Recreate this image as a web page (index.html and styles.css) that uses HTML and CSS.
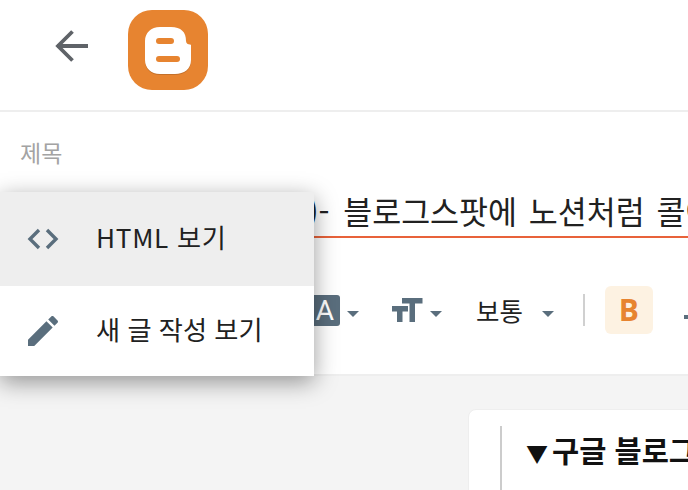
FILE: index.html
```html
<!DOCTYPE html>
<html lang="ko">
<head>
    <meta charset="UTF-8">
    <meta name="viewport" content="width=device-width, initial-scale=1.0">
    <title>새 글 작성</title>
    <link rel="stylesheet" href="styles.css">
</head>
<body>
    <header class="topbar">
        <svg class="back-icon" width="36" height="36" viewBox="0 0 36 36">
            <path d="M4 18H35M19.500 3.500L5 18L19.500 32.500" fill="none" stroke="#5f6368" stroke-width="3.800"/>
        </svg>
        <svg class="logo" width="80" height="80" viewBox="0 0 80 80">
            <rect width="80" height="80" rx="24" fill="#e78430"/>
            <path d="M32 18H43C53 18 58 23 58 32C58 34.500 60 35.500 62 35.500C63.500 35.500 63 37 63 39V51C63 60 56 65 47 65H32C23 65 17 59 17 51V32C17 24 23 18 32 18Z" fill="#c4702a"/>
            <path d="M32 17H43C53 17 58 22 58 31C58 33.500 60 34.500 62 34.500C63.500 34.500 63 36 63 38V50C63 59 56 64 47 64H32C23 64 17 58 17 50V31C17 23 23 17 32 17Z" fill="#fff"/>
            <rect x="28" y="28" width="18" height="6" rx="3" fill="#e78430"/>
            <rect x="28" y="46" width="24" height="6" rx="3" fill="#e78430"/>
        </svg>
    </header>

    <section class="title-area">
        <div class="title-label">제목</div>
        <div class="title-input"><span class="title-prefix">구글 블로그 꾸미기 (10)-</span>  <span class="title-main">블로그스팟에 노션처럼 콜아웃 넣기</span></div>
    </section>

    <div class="toolbar">
        <span class="tool-a">A</span>
        <span class="caret caret-a"></span>
        <svg class="tool-size" width="31" height="24" viewBox="0 0 31 24">
            <path d="M0 8H16V13.500H10.500V24H5V13.500H0ZM10 0H30.500V5.500H23V24H17.500V5.500H10Z" fill="#5a6e7d"/>
        </svg>
        <span class="caret caret-size"></span>
        <span class="tool-format">보통</span>
        <span class="caret caret-format"></span>
        <span class="tool-sep"></span>
        <span class="tool-bold">B</span>
        <span class="tool-next"></span>
    </div>

    <main class="editor">
        <div class="post-card">
            <div class="post-quote"><span class="quote-mark">▼</span>구글 블로그 꾸미기</div>
        </div>
    </main>

    <div class="mode-menu">
        <div class="mode-item mode-item-active">
            <svg class="mode-icon" width="40" height="40" viewBox="0 0 40 40">
                <path d="M16 11L7 20L16 29M24 11L33 20L24 29" fill="none" stroke="#5a6e7d" stroke-width="3.400"/>
            </svg>
            <span class="mode-text mode-text-html">HTML 보기</span>
        </div>
        <div class="mode-item">
            <svg class="mode-icon" width="40" height="40" viewBox="0 0 24 24">
                <path d="M3 17.250V21h3.750L17.810 9.940l-3.750-3.750L3 17.250zM20.710 7.040c.39-.39.39-1.020 0-1.410l-2.340-2.340c-.39-.39-1.020-.39-1.410 0l-1.830 1.830 3.750 3.750 1.830-1.830z" fill="#5a6e7d"/>
            </svg>
            <span class="mode-text">새 글 작성 보기</span>
        </div>
    </div>
</body>
</html>
```

FILE: styles.css
```css
html, body {
    margin: 0;
    height: 490px;
    overflow: hidden;
}
body {
    position: relative;
    font-family: "Noto Sans CJK KR", "Noto Sans", sans-serif;
    background: white;
    color: #212121;
}
.topbar {
    display: flex;
    align-items: flex-start;
    height: 112px;
    box-sizing: border-box;
    padding: 10px 0 0 53px;
    border-bottom: 2px solid #eeeeee;
}
.back-icon {
    margin: 18px 39px 0 0;
}
.title-area {
    height: 126px;
    box-sizing: border-box;
    padding-top: 24px;
    border-bottom: 2px solid #e8623a;
}
.title-label {
    margin-left: 20px;
    font-size: 23px;
    line-height: 32px;
    color: #a3a3a3;
}
.title-input {
    margin-top: 22px;
    padding-left: 4px;
    font-size: 31.500px;
    line-height: 40px;
    color: #212121;
    white-space: pre;
}
.title-prefix {
    margin-right: -4px;
}
.title-main {
    word-spacing: 3px;
}
.toolbar {
    display: flex;
    align-items: center;
    height: 138px;
    box-sizing: border-box;
    padding: 8px 0 0 310px;
    border-bottom: 2px solid #eeeeee;
    white-space: nowrap;
}
.toolbar > * {
    flex: none;
}
.tool-a {
    width: 30px;
    height: 31px;
    background: #5a6e7d;
    border-radius: 0 3px 3px 0;
    color: white;
    font-family: Roboto, sans-serif;
    font-size: 28px;
    line-height: 32px;
    text-align: center;
}
.caret {
    width: 0;
    height: 0;
    margin-top: 7px;
    border-left: 6.500px solid transparent;
    border-right: 6.500px solid transparent;
    border-top: 6.500px solid #5a6e7d;
}
.caret-a {
    margin-left: 7px;
}
.tool-size {
    margin-left: 33px;
}
.caret-size {
    margin-left: 7px;
}
.tool-format {
    margin-left: 34px;
    font-size: 25.500px;
    line-height: 32px;
}
.caret-format {
    margin-left: 19px;
}
.tool-sep {
    width: 2px;
    height: 32px;
    margin-left: 29px;
    background: #d0d0d0;
}
.tool-bold {
    width: 48px;
    height: 48px;
    margin-left: 20px;
    background: #fdf2e2;
    border-radius: 6px;
    color: #e78430;
    font-family: "Open Sans", sans-serif;
    font-size: 30px;
    font-weight: 700;
    line-height: 48px;
    text-align: center;
}
.tool-next {
    width: 4px;
    height: 4px;
    margin: 14px 0 0 31px;
    background: #5a6e7d;
}
.editor {
    height: 114px;
    background: #f4f4f4;
    padding: 33px 0 0 468px;
    box-sizing: border-box;
}
.post-card {
    width: 400px;
    height: 200px;
    box-sizing: border-box;
    padding: 16px 0 0 31px;
    background: white;
    border: 1px solid #eeeeee;
    border-radius: 8px;
}
.post-quote {
    height: 100px;
    padding-left: 24px;
    border-left: 2px solid #cccccc;
    font-size: 29.500px;
    font-weight: 700;
    line-height: 46px;
    color: #111111;
    white-space: nowrap;
}
.quote-mark {
    font-size: 22px;
    margin-right: 4px;
}
.mode-menu {
    position: absolute;
    top: 192px;
    left: 0;
    width: 314px;
    background: white;
    box-shadow: 0 6px 22px rgba(0, 0, 0, 0.4);
}
.mode-item {
    display: flex;
    align-items: center;
    height: 90px;
    padding-left: 23px;
    font-size: 26.200px;
    color: #212121;
}
.mode-item-active {
    height: 94px;
    background: #eeeeee;
}
.mode-icon {
    margin-right: 33px;
}
.mode-text {
    padding-bottom: 5px;
}
.mode-text-html {
    letter-spacing: 0.700px;
}
```
